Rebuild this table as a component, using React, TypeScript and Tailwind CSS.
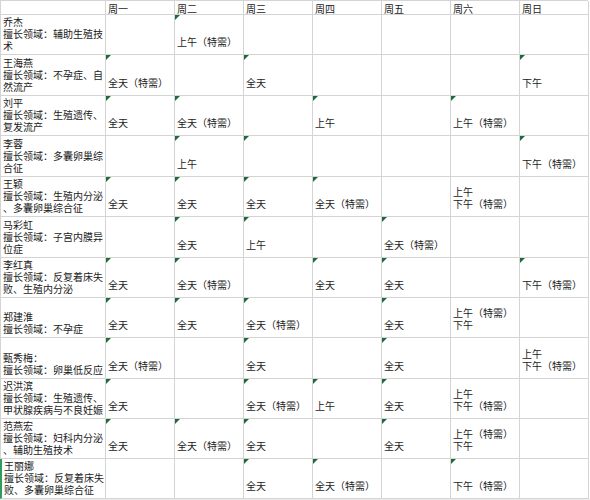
import React from "react";

const days = ["周一", "周二", "周三", "周四", "周五", "周六", "周日"];

interface Doctor {
  lines: string[];
  h: string;
  cells: (string[] | null)[];
  marks: number[];
}

const A = ["全天"];
const AT = ["全天（特需）"];
const M = ["上午"];
const MT = ["上午（特需）"];
const P = ["下午"];
const PT = ["下午（特需）"];

const doctors: Doctor[] = [
  { lines: ["乔杰", "擅长领域：辅助生殖技", "术"], h: "h-[40px]", cells: [null, MT, null, null, null, null, null], marks: [1] },
  { lines: ["王海燕", "擅长领域：不孕症、自", "然流产"], h: "h-[41px]", cells: [AT, null, A, null, null, null, P], marks: [0, 2, 6] },
  { lines: ["刘平", "擅长领域：生殖遗传、", "复发流产"], h: "h-[40px]", cells: [A, AT, null, M, null, MT, null], marks: [0, 1, 3, 5] },
  { lines: ["李蓉", "擅长领域：多囊卵巢综", "合征"], h: "h-[41px]", cells: [null, M, null, null, null, null, PT], marks: [1, 2, 6] },
  { lines: ["王颖", "擅长领域：生殖内分泌", "、多囊卵巢综合征"], h: "h-[40px]", cells: [A, A, A, AT, null, ["上午", "下午（特需）"], null], marks: [0, 1, 2, 3] },
  { lines: ["马彩虹", "擅长领域：子宫内膜异", "位症"], h: "h-[41px]", cells: [null, A, M, null, AT, null, null], marks: [1, 2, 4] },
  { lines: ["李红真", "擅长领域：反复着床失", "败、生殖内分泌"], h: "h-[40px]", cells: [A, AT, null, A, A, null, PT], marks: [0, 1, 3, 4, 6] },
  { lines: ["郑建淮", "擅长领域：不孕症"], h: "h-[40px]", cells: [A, A, AT, null, A, ["上午（特需）", "下午"], null], marks: [0, 1, 2, 4] },
  { lines: ["甄秀梅：", "擅长领域：卵巢低反应"], h: "h-[41px]", cells: [AT, null, A, null, A, null, ["上午", "下午（特需）"]], marks: [0, 2, 4] },
  { lines: ["迟洪滨", "擅长领域：生殖遗传、", "甲状腺疾病与不良妊娠"], h: "h-[40px]", cells: [A, null, AT, M, A, ["上午", "下午（特需）"], null], marks: [0, 2, 3, 4] },
  { lines: ["范燕宏", "擅长领域：妇科内分泌", "、辅助生殖技术"], h: "h-[40px]", cells: [A, AT, A, null, A, ["上午（特需）", "下午"], null], marks: [0, 1, 2, 4] },
  { lines: ["王丽娜", "擅长领域：反复着床失", "败、多囊卵巢综合征"], h: "h-[40px]", cells: [null, null, A, AT, null, PT, null], marks: [2, 3, 5] },
];

function Mark() {
  return (
    <svg className="absolute left-0 top-0" width="5" height="5" viewBox="0 0 5 5">
      <polygon points="0,0 5,0 0,5" fill="#1d6b3a" />
    </svg>
  );
}

function Cell({ lines, mark, className = "" }: { lines: string[] | null; mark?: boolean; className?: string }) {
  return (
    <div className={`relative flex flex-col justify-end pl-[2px] border-r border-b border-[#d4d4d4] ${className}`}>
      {mark && <Mark />}
      {lines?.map((l, i) => (
        <div key={i} className="whitespace-nowrap leading-[12px]">{l}</div>
      ))}
    </div>
  );
}

export default function App() {
  return (
    <div
      className="w-[590px] h-[500px] bg-[#ececec] overflow-hidden text-[10px] text-[#1a1a1a]"
      style={{ fontFamily: '"Noto Sans CJK SC", "Noto Sans", sans-serif' }}
    >
      <div className="w-[590px] bg-white">
        <div className="grid grid-cols-[105px_repeat(7,69px)] w-[588px] border-l border-t border-[#d4d4d4]">
          <Cell lines={null} className="h-[14px]" />
          {days.map((d) => (
            <Cell key={d} lines={[d]} className="h-[14px] justify-start pt-[2px]" />
          ))}
          {doctors.map((doc, r) => (
            <React.Fragment key={r}>
              <Cell
                lines={doc.lines}
                className={`${doc.h} pb-[2px] ${r === doctors.length - 1 ? "border-l-2 border-l-[#2e9e5e] -ml-px" : ""}`}
              />
              {doc.cells.map((c, i) => (
                <Cell key={i} lines={c} mark={doc.marks.includes(i)} className={`${doc.h} pb-[6px]`} />
              ))}
            </React.Fragment>
          ))}
        </div>
      </div>
    </div>
  );
}
